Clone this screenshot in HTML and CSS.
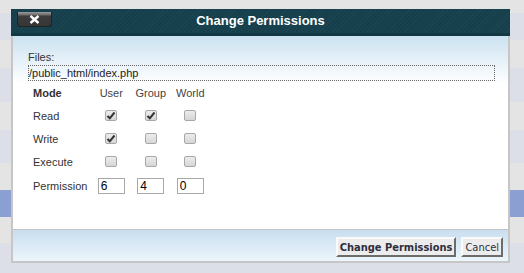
FILE: index.html
```html
<!DOCTYPE html>
<html lang="en">
<head>
  <meta charset="UTF-8">
  <title>Change Permissions</title>
  <link rel="stylesheet" href="styles.css">
</head>
<body>
  <div class="backdrop">
    <div class="row grey" style="height:13px"></div>
    <div class="row blue" style="height:27px"></div>
    <div class="row grey" style="height:28px"></div>
    <div class="row blue" style="height:34px"></div>
    <div class="row grey" style="height:28px"></div>
    <div class="row blue" style="height:33px"></div>
    <div class="row grey" style="height:27px"></div>
    <div class="row selected" style="height:27px"></div>
    <div class="row grey" style="height:26px"></div>
    <div class="row blue" style="height:30px"></div>
  </div>

  <div class="dialog">
    <div class="dlg-title">
      <button class="dlg-close">
        <svg width="11" height="9" viewBox="0 0 11 9"><path d="M1.5 1 L9.5 8 M9.5 1 L1.5 8" stroke="#fff" stroke-width="2.4" fill="none"/></svg>
      </button>
      <span>Change Permissions</span>
    </div>
    <div class="dlg-panel">
      <div class="dlg-body">
        <div class="files-label">Files:</div>
        <div class="files-box">/public_html/index.php</div>
        <div class="perm-grid">
          <div class="lbl head">Mode</div>
          <div class="col-head">User</div>
          <div class="col-head">Group</div>
          <div class="col-head">World</div>

          <div class="lbl">Read</div>
          <div class="cell"><span class="cb"><svg width="10" height="9" viewBox="0 0 10 9"><path d="M1.5 5 L3.8 7.3 L8.5 1.5" stroke="#333" stroke-width="2" fill="none"/></svg></span></div>
          <div class="cell"><span class="cb"><svg width="10" height="9" viewBox="0 0 10 9"><path d="M1.5 5 L3.8 7.3 L8.5 1.5" stroke="#333" stroke-width="2" fill="none"/></svg></span></div>
          <div class="cell"><span class="cb"></span></div>

          <div class="lbl">Write</div>
          <div class="cell"><span class="cb"><svg width="10" height="9" viewBox="0 0 10 9"><path d="M1.5 5 L3.8 7.3 L8.5 1.5" stroke="#333" stroke-width="2" fill="none"/></svg></span></div>
          <div class="cell"><span class="cb"></span></div>
          <div class="cell"><span class="cb"></span></div>

          <div class="lbl">Execute</div>
          <div class="cell"><span class="cb"></span></div>
          <div class="cell"><span class="cb"></span></div>
          <div class="cell"><span class="cb"></span></div>

          <div class="lbl">Permission</div>
          <div class="cell"><input class="perm-input" type="text" value="6"></div>
          <div class="cell"><input class="perm-input" type="text" value="4"></div>
          <div class="cell"><input class="perm-input" type="text" value="0"></div>
        </div>
      </div>
      <div class="dlg-footer">
        <button class="btn btn-primary">Change Permissions</button>
        <button class="btn">Cancel</button>
      </div>
    </div>
  </div>
</body>
</html>
```

FILE: styles.css
```css
body { margin: 0; background: #e5e5e5; font-family: "Liberation Sans", Arial, sans-serif; overflow: hidden; }
.backdrop { display: flex; flex-direction: column; }
.row.grey { background: #e4e4e4; }
.row.blue { background: #dcdfe8; }
.row.selected { background: #8c9fd2; }

.dialog {
  position: absolute; left: 11px; top: 9px; width: 499px;
  display: flex; flex-direction: column;
}
.dlg-title {
  position: relative; height: 27px; box-sizing: border-box;
  background: repeating-linear-gradient(135deg, #1a4653 0 1px, #163f4b 1px 3px);
  border-bottom: 3px solid #123843;
  color: #fff; font-weight: bold; font-size: 13px; text-align: center; line-height: 24px;
}
.dlg-close {
  position: absolute; left: 6px; top: 3px; width: 35px; height: 15px; padding: 0;
  border: 1px solid #222; border-top: none; border-radius: 0 0 4px 4px;
  background: linear-gradient(#9a9a9a 0, #6a6a6a 3px, #3c3c3c 4px, #363636 100%);
  display: flex; align-items: center; justify-content: center;
}
.dlg-panel { border: 2px solid #c6c6c6; border-top: none; background: #fff; }
.dlg-body {
  height: 193px; box-sizing: border-box; padding: 14px 13px 0 15px;
  background: linear-gradient(#cbe2f1 0, #ffffff 48px) no-repeat;
  font-size: 11px; color: #333;
}
.files-label { line-height: 15px; }
.files-box { border: 1px dotted #666; line-height: 14px; color: #222; }
.perm-grid {
  display: grid; grid-template-columns: 63.5px repeat(3, 39.5px);
  grid-template-rows: 23px 23px 23px 23px 25px; align-items: center;
}
.lbl { padding-left: 5px; color: #333; }
.lbl.head { font-weight: bold; }
.col-head { text-align: center; color: #444; }
.cell { display: flex; justify-content: center; }
.cb {
  width: 12px; height: 11px; box-sizing: border-box; border: 1px solid #a8a8a8; border-radius: 2px;
  background: linear-gradient(#ececec, #d6d6d6); display: flex; align-items: center; justify-content: center;
}
.perm-input {
  width: 27px; height: 16px; box-sizing: border-box; border: 1px solid #a9a9a9; padding: 0 2px;
  font: 12px "Liberation Sans", Arial, sans-serif; color: #000; margin: 0;
}
.dlg-footer {
  height: 32px; box-sizing: border-box; border-top: 1px solid #c4c4c4; padding: 7px 5px 0 0;
  background: linear-gradient(#c9def0, #ecf5fb);
  display: flex; justify-content: flex-end; align-items: flex-start; gap: 5px;
}
.btn {
  height: 20px; padding: 0 2px; box-sizing: border-box; margin: 0; white-space: nowrap;
  border: 2px solid; border-color: #fafafa #6c6c6c #6c6c6c #fafafa;
  background: #ececec; color: #2e2e3e;
  font: 11px "DejaVu Sans Condensed", "DejaVu Sans", sans-serif;
}
.btn-primary { font-weight: bold; }
```
